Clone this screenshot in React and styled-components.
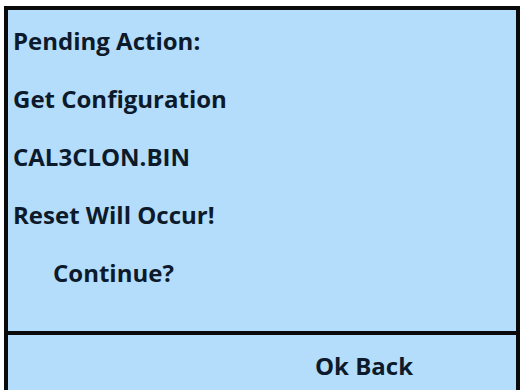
import React from "react";
import styled, { createGlobalStyle } from "styled-components";

const Global = createGlobalStyle`
  html, body {
    margin: 0;
    padding: 0;
    background: #ffffff;
  }
  body {
    font-family: "Open Sans", Lato, sans-serif;
  }
`;

const Screen = styled.div`
  margin: 6px 0 0 4px;
  width: 516px;
  height: 384px;
  box-sizing: border-box;
  border: 4px solid #0a0a0a;
  border-bottom: none;
  background: #b4ddfc;
  display: flex;
  flex-direction: column;
  overflow: hidden;
`;

const Body = styled.div`
  flex: 0 0 325px;
  box-sizing: border-box;
  padding: 2px 0 0 5px;
  border-bottom: 4px solid #0a0a0a;
`;

const Line = styled.div`
  font-size: 24px;
  font-weight: 700;
  line-height: 58px;
  color: #0c1a2b;
  padding-left: ${(p) => (p.indent ? "40px" : "0")};
  white-space: nowrap;
`;

const Footer = styled.div`
  flex: 1 1 auto;
  min-height: 0;
  display: flex;
  align-items: flex-start;
  padding: 2px 0 0 307px;
`;

const SoftKeys = styled.span`
  font-size: 24px;
  font-weight: 700;
  line-height: 58px;
  color: #0c1a2b;
`;

export default function App() {
  return (
    <>
      <Global />
      <Screen>
        <Body>
          <Line>Pending Action:</Line>
          <Line>Get Configuration</Line>
          <Line>CAL3CLON.BIN</Line>
          <Line>Reset Will Occur!</Line>
          <Line indent>Continue?</Line>
        </Body>
        <Footer>
          <SoftKeys>Ok Back</SoftKeys>
        </Footer>
      </Screen>
    </>
  );
}
